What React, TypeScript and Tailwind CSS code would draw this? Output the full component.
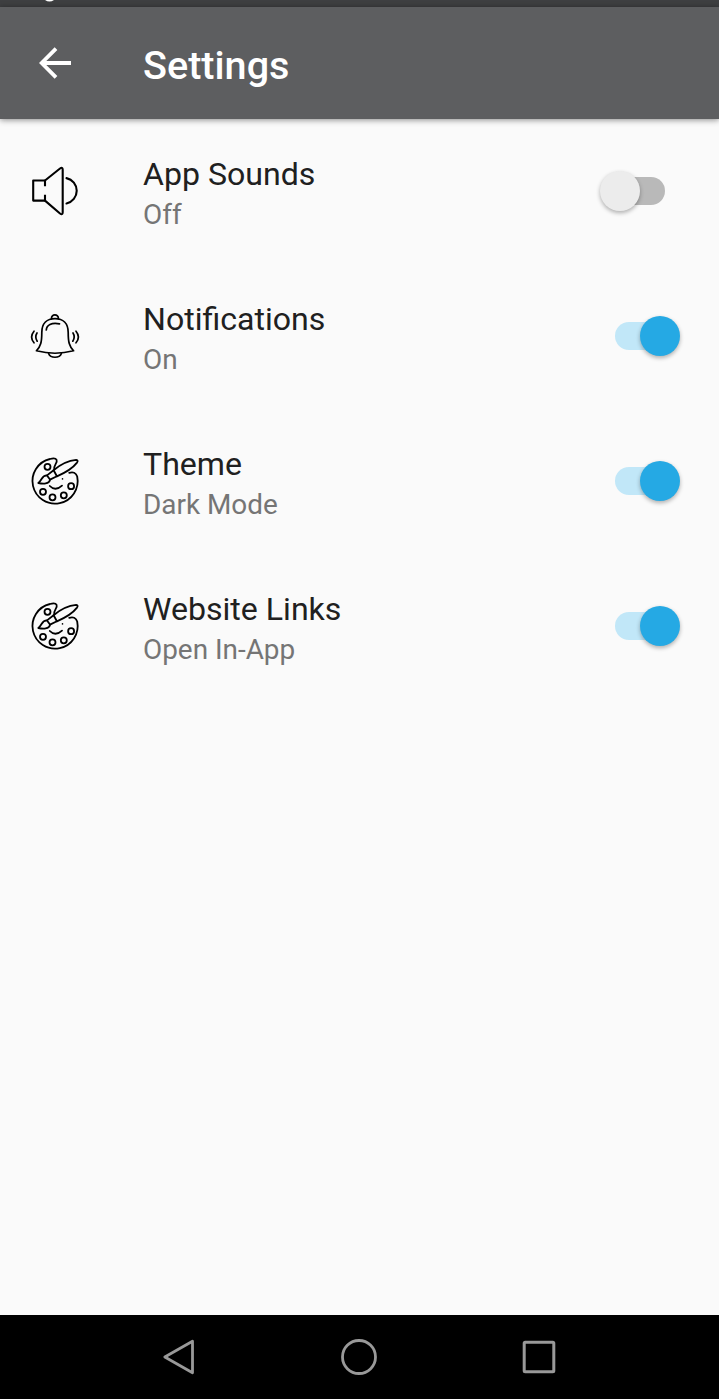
import { useState } from "react";

const SoundIcon = () => (
  <svg
    viewBox="0 0 70 70"
    className="w-[70px] h-[70px]"
    fill="none"
    stroke="#000"
    strokeWidth="2.1"
    strokeLinecap="round"
    strokeLinejoin="round"
  >
    <path d="M25 31.3V25.5H13.2V45.6H25V39.8" strokeLinecap="butt" />
    <path d="M25 25.5L40 13.5Q42.7 11.7 42.7 14.7V57.3Q42.7 60.3 40 58.5L25 45.6" />
    <path d="M46.5 23.1A13 13 0 0 1 46.5 48.5" />
  </svg>
);

const BellIcon = () => (
  <svg
    viewBox="0 0 70 70"
    className="w-[70px] h-[70px]"
    fill="none"
    stroke="#000"
    strokeWidth="1.7"
    strokeLinecap="round"
    strokeLinejoin="round"
  >
    <path d="M31.5 18.8C31 13.5 38.8 13.5 38.4 18.8" />
    <path d="M16.4 50.8C20.8 46.5 21.8 42 21.8 32.5C21.8 23.5 27 18.6 35 18.6C43 18.6 48.2 23.5 48.2 32.5C48.2 42 49.2 46.5 53.6 50.8C41.5 54 28.5 54 16.4 50.8Z" />
    <path d="M26.3 30C26.5 25 31.5 22.2 39.5 23.8" />
    <path d="M28.6 53.5C30.5 58.5 39.5 58.5 41.4 53.5" />
    <path d="M17 33Q14.5 37 17.2 41.2M14 31.2Q9.2 37 14 42.8" />
    <path d="M53 33Q55.5 37 52.8 41.2M56 31.2Q60.8 37 56 42.8" />
  </svg>
);

const PaletteIcon = () => (
  <svg
    viewBox="0 0 70 70"
    className="w-[70px] h-[70px]"
    fill="none"
    stroke="#000"
    strokeWidth="1.8"
    strokeLinecap="round"
    strokeLinejoin="round"
  >
    {/* Palette */}
    <path d="M34.2 24C33.6 20.5 37.8 17.5 36.6 14.8C35.6 12.9 32.5 13.3 30 14A22.6 22.6 0 1 0 57.2 31.5C56 27.6 53 26.6 49.2 27.8" />
    <circle cx="27.5" cy="21.8" r="3" />
    <circle cx="23" cy="46.8" r="3" />
    <circle cx="32.5" cy="52.3" r="3" />
    <circle cx="43.8" cy="50.3" r="3" />
    <circle cx="51.1" cy="41.2" r="3" />
    {/* Brush */}
    <path d="M33.6 25.2C41 19 48.5 15.6 56.2 14.9Q58.6 15.2 57 17.6C52.5 23.5 45.5 27.6 36.9 31.3Z" />
    <path d="M33.6 25.2L27 30.4L30 34.6L36.9 31.3" />
    <path d="M27 30.4C21.6 30.2 22.4 35 18.3 38C23 38.9 29.4 39.2 30 34.6" />
    <path d="M29.8 41Q35.3 46.8 42 40.6" />
    <circle cx="42.5" cy="33.9" r="0.8" fill="#000" stroke="none" />
  </svg>
);

type Setting = {
  title: string;
  on: string;
  off: string;
  enabled: boolean;
  Icon: () => React.JSX.Element;
};

const settings: Setting[] = [
  { title: "App Sounds", on: "On", off: "Off", enabled: false, Icon: SoundIcon },
  { title: "Notifications", on: "On", off: "Off", enabled: true, Icon: BellIcon },
  { title: "Theme", on: "Dark Mode", off: "Light Mode", enabled: true, Icon: PaletteIcon },
  { title: "Website Links", on: "Open In-App", off: "Open In Browser", enabled: true, Icon: PaletteIcon },
];

const SettingRow = ({ title, on, off, enabled, Icon }: Setting) => {
  const [checked, setChecked] = useState(enabled);

  return (
    <li className="flex items-start h-[145px] pl-5 pr-[39px] pt-9">
      <Icon />
      <div className="ml-[53px] flex-1">
        <p className="text-[32.1px] leading-[38px] text-[#202020]">{title}</p>
        <p className="mt-[3px] text-[27.9px] leading-[38px] text-[#757575]">
          {checked ? on : off}
        </p>
      </div>
      <button
        type="button"
        role="switch"
        aria-checked={checked}
        aria-label={title}
        onClick={() => setChecked(!checked)}
        className="relative mt-4 w-20 h-10 flex items-center justify-center"
      >
        <span
          className={`w-[50px] h-7 rounded-full ${checked ? "bg-[#c1e7f8]" : "bg-[#b9b9b9]"}`}
        />
        <span
          className={`absolute top-0 size-10 rounded-full shadow-[0_2px_4px_rgba(0,0,0,0.3)] ${
            checked ? "right-0 bg-[#25a9e4]" : "left-0 bg-[#ececec]"
          }`}
        />
      </button>
    </li>
  );
};

export default function App() {
  return (
    <div className="flex flex-col w-full h-[1399px] bg-[#fafafa] font-[Roboto,sans-serif] overflow-hidden">
      {/* Status bar */}
      <div className="h-[7px] shrink-0 bg-[#3e3f41] pl-[45px]">
        <svg viewBox="0 0 9 2" className="w-[9px] h-[2px]">
          <path d="M0 0H9Q4.5 3 0 0Z" fill="#fff" />
        </svg>
      </div>

      {/* App bar */}
      <header className="flex h-28 shrink-0 bg-[#5d5e60] text-white shadow-[0_1px_6px_rgba(0,0,0,0.45)]">
        <button type="button" aria-label="Back" className="ml-[39px] mt-10 size-8">
          <svg viewBox="0 0 32 32" className="size-8" fill="none" stroke="#fff" strokeWidth="3.8">
            <path d="M32 16H3M17 1.6L2.7 16L17 30.4" />
          </svg>
        </button>
        <h1 className="ml-[72px] mt-[35px] text-[39.6px] leading-[48px] font-medium">
          Settings
        </h1>
      </header>

      <ul className="flex-1">
        {settings.map((setting) => (
          <SettingRow key={setting.title} {...setting} />
        ))}
      </ul>

      {/* Navigation bar */}
      <nav className="flex h-[84px] shrink-0 bg-black pl-[89px]">
        <button type="button" aria-label="Back" className="flex w-[180px] items-center justify-center">
          <svg viewBox="0 0 40 40" className="size-10" fill="none" stroke="#999" strokeWidth="2.8" strokeLinejoin="round">
            <path d="M5.8 20L33.5 4.2V35.8Z" />
          </svg>
        </button>
        <button type="button" aria-label="Home" className="flex w-[180px] items-center justify-center">
          <svg viewBox="0 0 40 40" className="size-10" fill="none" stroke="#999" strokeWidth="2.8">
            <circle cx="20" cy="20" r="16.5" />
          </svg>
        </button>
        <button type="button" aria-label="Recent apps" className="flex w-[180px] items-center justify-center">
          <svg viewBox="0 0 40 40" className="size-10" fill="none" stroke="#999" strokeWidth="3">
            <rect x="5.2" y="5.2" width="29.6" height="29.6" rx="1" />
          </svg>
        </button>
      </nav>
    </div>
  );
}
